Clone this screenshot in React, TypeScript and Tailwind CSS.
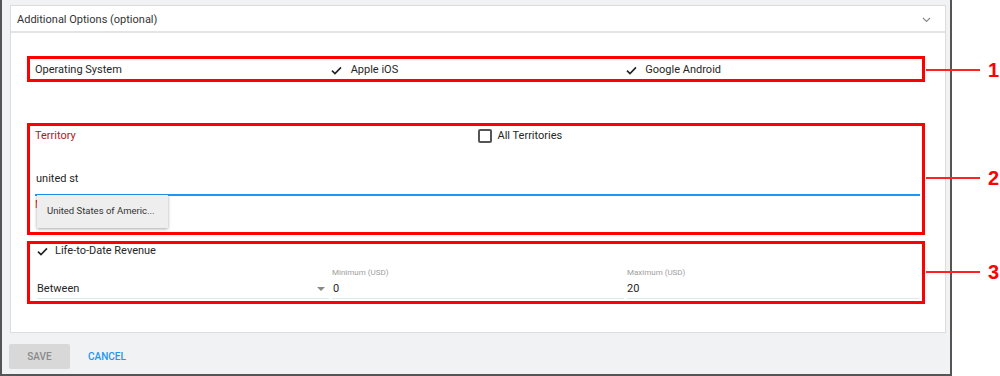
import React from 'react';

const font = { fontFamily: 'Roboto, "Liberation Sans", sans-serif' };

function Tick() {
  return (
    <svg width="11" height="9" viewBox="0 0 11 9" className="shrink-0">
      <path d="M1 4.6 L4 7.6 L10 1.4" fill="none" stroke="#222" strokeWidth="1.6" />
    </svg>
  );
}

function Annotation({ top, label }: { top: number; label: string }) {
  // callout line + number on the right margin
  return (
    <div className="absolute left-[926px] flex items-center" style={{ top: top - 11 }}>
      <div className="h-[2px] w-[54px] bg-[#f22]" />
      <span
        className="ml-[8px] text-[20px] font-bold leading-[22px] text-[#f00]"
        style={{ fontFamily: '"Liberation Sans", Arial, sans-serif' }}
      >
        {label}
      </span>
    </div>
  );
}

export default function App() {
  return (
    <div className="relative h-[376px] w-[1000px] bg-white text-[11px] text-[#262626]" style={font}>
      <div className="flex h-[376px] w-[952px] flex-col border-x-2 border-b-2 border-[#555] bg-[#f1f2f4] pl-[8px] pr-[4px] pt-[5px]">
        {/* panel */}
        <div className="flex h-[328px] flex-col border border-[#dcdcdc] bg-white">
          <div className="flex h-[27px] shrink-0 items-center justify-between border-b-2 border-[#e4e4e4] pl-[6px] pr-[14px] pt-[3px]">
            <span className="text-[11px] text-[#333]">Additional Options (optional)</span>
            <svg width="9" height="6" viewBox="0 0 9 6">
              <path d="M1 1 L4.5 4.5 L8 1" fill="none" stroke="#888" strokeWidth="1.1" />
            </svg>
          </div>

          <div className="ml-4 mr-5 flex flex-col">
            {/* box 1 */}
            <div className="mt-[23px] grid h-[26px] grid-cols-3 items-center border-[3px] border-[#f00] pl-[5px] pt-[2px]">
              <span>Operating System</span>
              <span className="flex items-center gap-[9px]">
                <Tick />
                Apple iOS
              </span>
              <span className="flex items-center gap-[8px]">
                <Tick />
                Google Android
              </span>
            </div>

            {/* box 2 */}
            <div className="relative mt-[41px] flex h-[112px] flex-col border-[3px] border-[#f00] pl-[5px] pr-[2px]">
              <div className="grid h-[18px] grid-cols-2 items-center pt-[2px]">
                <span className="text-[#b01818]">Territory</span>
                <span className="flex items-center gap-[6px]">
                  <span className="h-[14px] w-[14px] rounded-[2px] border-2 border-[#555]" />
                  All Territories
                </span>
              </div>
              <div className="mt-[26px] flex h-[26px] items-center border-b-2 border-[#2196f3] pb-[6px] pl-[1px]">
                united st
              </div>
              <div className="mt-[1px] text-[10px] text-[#c62828]">No results</div>
              <div className="absolute left-[7px] top-[69px] flex h-[33px] w-[131px] items-center bg-[#eeeeee] pl-[10px] text-[9.5px] text-[#333] shadow-[0_1px_3px_rgba(0,0,0,0.35)]">
                United States of Americ...
              </div>
            </div>

            {/* box 3 */}
            <div className="mt-[6px] flex h-[63px] flex-col border-[3px] border-[#f00] pl-[7px] pr-[3px]">
              <div className="flex h-[14px] items-center gap-[7px]">
                <Tick />
                Life-to-Date Revenue
              </div>
              <div className="mt-[9px] grid grid-cols-3 gap-[3px]">
                <div className="flex flex-col">
                  <span className="h-[12px]" />
                  <div className="flex h-[20px] items-center justify-between border-b border-[#e6e6e6] pr-[4px] pt-[1px]">
                    <span>Between</span>
                    <svg width="8" height="4" viewBox="0 0 8 4">
                      <path d="M0 0 L8 0 L4 4 Z" fill="#888" />
                    </svg>
                  </div>
                </div>
                <div className="flex flex-col">
                  <span className="h-[12px] text-[8px] leading-[12px] text-[#9e9e9e]">Minimum (USD)</span>
                  <div className="flex h-[20px] items-center border-b border-[#e6e6e6] pl-[1px] pt-[1px]">0</div>
                </div>
                <div className="flex flex-col">
                  <span className="h-[12px] text-[8px] leading-[12px] text-[#9e9e9e]">Maximum (USD)</span>
                  <div className="flex h-[20px] items-center border-b border-[#e6e6e6] pt-[1px]">20</div>
                </div>
              </div>
            </div>
          </div>
        </div>

        {/* footer */}
        <div className="mt-[11px] flex items-center gap-[18px] -ml-px">
          <button className="h-[25px] w-[61px] rounded-[2px] bg-[#d8d8d8] text-[10px] font-medium text-[#8a8a8a]">
            SAVE
          </button>
          <button className="text-[10px] font-medium text-[#2196f3]">CANCEL</button>
        </div>
      </div>

      <Annotation top={70} label="1" />
      <Annotation top={178} label="2" />
      <Annotation top={272} label="3" />
    </div>
  );
}
